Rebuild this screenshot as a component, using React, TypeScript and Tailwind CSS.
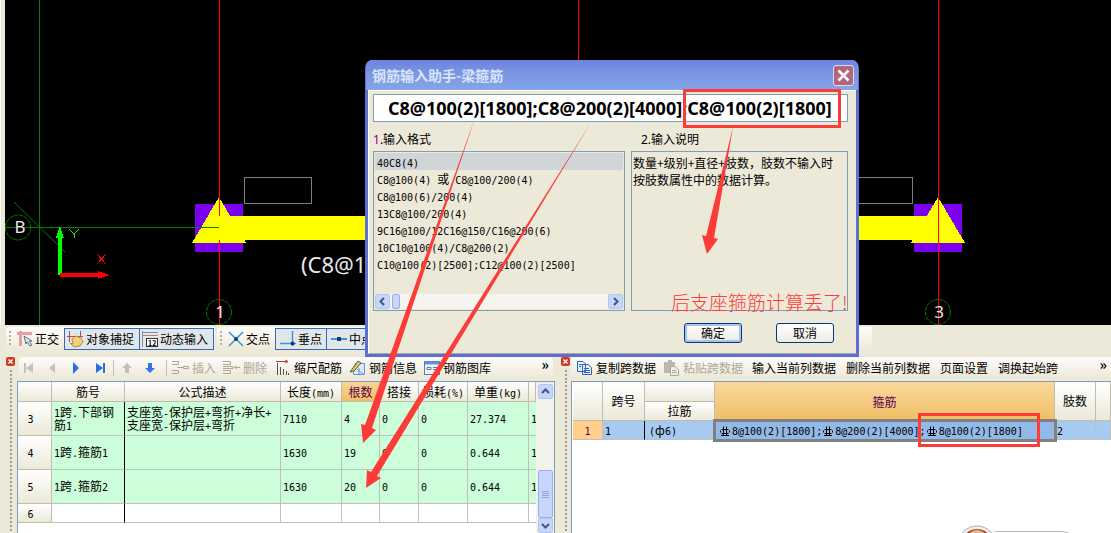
import { Fragment, type ReactNode } from "react";
import { clsx } from "clsx";

const formats = [
  "40C8(4)",
  "C8@100(4) 或 C8@100/200(4)",
  "C8@100(6)/200(4)",
  "13C8@100/200(4)",
  "9C16@100/12C16@150/C16@200(6)",
  "10C10@100(4)/C8@200(2)",
  "C10@100(2)[2500];C12@100(2)[2500]",
];

const barRows = [
  { no: "3", name: "1跨.下部钢筋1", desc: "支座宽-保护层+弯折+净长+\n支座宽-保护层+弯折", length: "7110", count: "4", lap: "0", loss: "0", weight: "27.374", total: "1" },
  { no: "4", name: "1跨.箍筋1", desc: "", length: "1630", count: "19", lap: "0", loss: "0", weight: "0.644", total: "1" },
  { no: "5", name: "1跨.箍筋2", desc: "", length: "1630", count: "20", lap: "0", loss: "0", weight: "0.644", total: "1" },
];

const headCell = "border-r border-b border-[#c0bcb0] bg-linear-to-b from-white to-[#ece9d8] font-normal p-0 text-center";
const bodyCell = "border-r border-b border-[#c0c0c0] pl-0.5 py-0";

// Half-width characters are set in a monospace face, six pixels each
function Mixed({ text }: { text: string }) {
  return (
    <>
      {text.split(/([\x20-\x7e]+)/).map((part, i) =>
        /^[\x20-\x7e]+$/.test(part) ? (
          <span key={i} className="font-['DejaVu_Sans_Mono',monospace] text-[10px] leading-none whitespace-pre">
            {part}
          </span>
        ) : (
          <Fragment key={i}>{part}</Fragment>
        )
      )}
    </>
  );
}

// Grade symbol of a ribbed bar
function BarSymbol() {
  return (
    <svg width="13" height="11" viewBox="0 0 13 11" className="inline-block align-[-2px]" fill="none" stroke="#000" aria-hidden="true">
      <path d="M4.5 0.5v9M7.5 0.5v9M2 9.5h8M2.5 3.5h7M1.5 4.5v2M10.5 4.5v2M2.5 7.5h7" />
    </svg>
  );
}

function Grip({ className }: { className?: string }) {
  return (
    <svg width="3" height="18" className={className} aria-hidden="true">
      {[1, 5, 9, 13].map((y) => (
        <rect key={y} y={y} width="2" height="2" fill="#b5b2a4" />
      ))}
    </svg>
  );
}

/* ── CAD VIEW ─────────────────────────────────────────────── */

function Support({ x }: { x: number }) {
  return (
    <>
      <rect x={x - 24} y="204" width="48" height="48" fill="#7b00ef" />
      <path d={`M${x} 197L${x + 27} 243H${x - 27}Z`} fill="#ff0" />
    </>
  );
}

function CadView() {
  return (
    <div className="h-[325px] bg-[#ece9d8] border-l border-white pl-1 shrink-0">
      <svg className="block w-full h-full bg-black" shapeRendering="crispEdges">
        <g transform="translate(-5 0)" fill="none">
          <path d="M244.500 177.500H311.500V203.500H244.500Z" stroke="#808080" />
          <path d="M840.500 177.500H912.500V203.500H840.500" stroke="#808080" />
          <Support x={219} />
          <Support x={938} />
          <rect x="219" y="216" width="720" height="24" fill="#ff0" />
          <path d="M39.500 0V325M5 227.500H219" stroke="#008000" />
          <path d="M219.500 0V216M219.500 240V325M938.500 0V325M578.500 0V60" stroke="#f00" />
          <g stroke="#008000" shapeRendering="auto">
            <path d="M14 202L65 252" />
            <circle cx="18" cy="227.500" r="12.500" strokeDasharray="4 1" />
            <circle cx="219" cy="312" r="12.500" strokeDasharray="4 1" />
            <circle cx="938" cy="312" r="12.500" strokeDasharray="4 1" />
          </g>
          <path d="M58 275V238H56L60 226L64 238H62V275Z" fill="#0f0" />
          <path d="M60 273V277H98V279L109 275L98 271V273Z" fill="#f00" />
          <path d="M69 229L74 234L79 229M74 234V238" stroke="#0f0" />
          <path d="M97 254L106 264M106 254L97 264" stroke="#f00" />
          <g className="font-['Noto_Sans',sans-serif]" fill="#e8e8e8" fontSize="17" textAnchor="middle">
            <text x="20" y="233">B</text>
            <text x="220" y="318">1</text>
            <text x="939" y="318">3</text>
          </g>
          <text x="301" y="273" fontSize="22" fill="#e8e8e8" className="font-['Noto_Sans',sans-serif]">
            (C8@1
          </text>
        </g>
      </svg>
    </div>
  );
}

/* ── SNAP TOOLBAR ─────────────────────────────────────────── */

function SnapButton({ active, className, icon, children }: { active?: boolean; className: string; icon: ReactNode; children: ReactNode }) {
  return (
    <button
      className={clsx(
        "flex items-center gap-0.5 h-[22px] border whitespace-nowrap shrink-0 overflow-hidden",
        active ? "border-[#316ac5] bg-[#e1e6e8]" : "border-transparent",
        className
      )}
    >
      {icon}
      {children}
    </button>
  );
}

function SnapToolbar() {
  return (
    <div className="flex h-8 pt-0.5 pl-1.5 bg-[#ece9d8] shrink-0">
      <div className="flex items-center h-6 w-[209px] rounded-l bg-linear-to-b from-[#fdfcfa] to-[#ece9d8]">
        <Grip className="ml-[3px]" />
        <SnapButton
          className="w-[49px] pl-1"
          icon={
            <svg width="16" height="16" className="shrink-0" aria-hidden="true">
              <path d="M0 2.500H15M3.500 0V15" stroke="#e7a0a0" strokeWidth="3" />
              <path d="M7 5l2 8 1-2 3 4 2-1-3-4h3z" fill="#dce8ee" stroke="#5d7385" />
            </svg>
          }
        >
          正交
        </SnapButton>
        <SnapButton
          active
          className="w-[76px] ml-[3px] pl-0.5"
          icon={
            <svg width="17" height="17" className="shrink-0" aria-hidden="true">
              <path d="M0 5.500H16M2.500 0V11M13.500 0V6" stroke="#a6534a" />
              <path d="M5 8l4-3 5 2 2 4-3 4-6 1-4-4 3 1z" fill="#efcf7f" stroke="#b58e3e" />
            </svg>
          }
        >
          对象捕捉
        </SnapButton>
        <SnapButton
          active
          className="w-[75px] -ml-px pl-0.5"
          icon={
            <svg width="16" height="16" className="shrink-0" aria-hidden="true">
              <path d="M0 1.500H16M0 4.500H16M.5 0V16" stroke="#a08888" />
              <rect x="4.500" y="7.500" width="11" height="8" fill="#fff" stroke="#333" />
              <text x="6" y="15" fontSize="7" fontWeight="bold">12</text>
            </svg>
          }
        >
          动态输入
        </SnapButton>
      </div>
      <div className="flex items-center h-6 w-[655px] ml-0.5 rounded-l bg-linear-to-b from-[#fdfcfa] to-[#ece9d8]">
        <Grip className="ml-[3px]" />
        <SnapButton
          className="w-[52px] pl-1"
          icon={
            <svg width="16" height="16" className="shrink-0" aria-hidden="true">
              <path d="M1 1L15 15M15 1L1 15" stroke="#3f94dc" strokeWidth="1.500" />
              <circle cx="8" cy="8" r="2" fill="#113c77" />
            </svg>
          }
        >
          交点
        </SnapButton>
        <SnapButton
          active
          className="w-[52px] pl-1"
          icon={
            <svg width="16" height="16" className="shrink-0" aria-hidden="true">
              <path d="M12.500 0V15M0 12.500H16" stroke="#3f94dc" strokeWidth="1.500" />
              <circle cx="12.500" cy="12.500" r="2" fill="#113c77" />
            </svg>
          }
        >
          垂点
        </SnapButton>
        <SnapButton
          active
          className="w-[52px] -ml-px pl-1"
          icon={
            <svg width="16" height="16" className="shrink-0" aria-hidden="true">
              <path d="M0 8H16" stroke="#3f94dc" strokeWidth="2" />
              <rect x="6" y="6" width="4" height="4" fill="#113c77" />
            </svg>
          }
        >
          中点
        </SnapButton>
      </div>
    </div>
  );
}

/* ── DOCKED PANELS ────────────────────────────────────────── */

function DockEdge() {
  return (
    <div className="flex flex-col items-center w-[11px] shrink-0">
      <button aria-label="关闭面板" className="size-[9px] rounded-xs bg-[#cf3c22] shrink-0">
        <svg viewBox="0 0 9 9" aria-hidden="true">
          <path d="M2.500 2.500l4 4M6.500 2.500l-4 4" stroke="#fff" strokeWidth="1.300" />
        </svg>
      </button>
      <div className="w-0.5 grow mt-1 bg-[repeating-linear-gradient(to_bottom,#a19f94_0_2px,transparent_2px_4px)]" />
    </div>
  );
}

function ToolButton({ label, disabled, icon, className }: { label: string; disabled?: boolean; icon?: ReactNode; className?: string }) {
  return (
    <button disabled={disabled} className={clsx("flex items-center gap-[3px] whitespace-nowrap shrink-0", disabled && "text-[#aca899]", className)}>
      {icon}
      {label}
    </button>
  );
}

function MoreButton() {
  return (
    <button aria-label="更多" className="self-start ml-auto mr-1 text-[14px] leading-[14px] font-bold">
      »
    </button>
  );
}

function NavButton({ label, d, color, className }: { label: string; d: string; color: string; className: string }) {
  return (
    <button aria-label={label} className={clsx("shrink-0", className)}>
      <svg width="12" height="12" className="block" aria-hidden="true">
        <path d={d} fill={color} />
      </svg>
    </button>
  );
}

function BarToolbar() {
  return (
    <div className="flex items-center h-[21px] mr-[5px] ml-[3px] rounded bg-linear-to-b from-[#fdfcfa] to-[#ece9d8]">
      <NavButton label="首条" color="#c3c2be" d="M0 1H2V11H0ZM9 1V11L2 6Z" className="ml-[5px]" />
      <NavButton label="上一条" color="#c3c2be" d="M8 1V11L2 6Z" className="ml-[11px]" />
      <NavButton label="下一条" color="#2a6fe0" d="M2 0V12L8 6Z" className="ml-3" />
      <NavButton label="末条" color="#2a6fe0" d="M8 1H10V11H8ZM1 1V11L8 6Z" className="ml-3" />
      <div className="w-px h-4 ml-1.5 bg-[#c5c2b2] shrink-0" />
      <NavButton label="上移" color="#c0bfbb" d="M6 1L11 6H8V11H4V6H1Z" className="ml-[7px]" />
      <NavButton label="下移" color="#3874df" d="M6 11L11 6H8V1H4V6H1Z" className="ml-[11px]" />
      <div className="w-px h-4 ml-2.5 bg-[#c5c2b2] shrink-0" />
      <ToolButton
        label="插入"
        disabled
        className="ml-[5px]"
        icon={
          <svg width="17" height="16" fill="none" stroke="#aca899" aria-hidden="true">
            <path d="M0 1.500H6.500V4.500H0M0 10.500H6.500V13.500H0M5 7.500H11M11.500 6.500H16.500V8.500H11.500Z" />
          </svg>
        }
      />
      <ToolButton
        label="删除"
        disabled
        className="ml-[7px]"
        icon={
          <svg width="17" height="16" fill="none" stroke="#aca899" aria-hidden="true">
            <path d="M0 1.500H7.500V4.500H0M0 10.500H7.500V13.500H0M0 6.500H10V8.500H0M11 7.500H17M13 5.500V9.500" />
          </svg>
        }
      />
      <ToolButton
        label="缩尺配筋"
        className="ml-[9px]"
        icon={
          <svg width="15" height="16" fill="none" aria-hidden="true">
            <path d="M1.500 3V15M4.500 7V15M7.500 9V15M10.500 11V15M12.500 13V15" stroke="#555" />
            <path d="M0 1.500H12M9 0L12 1.500L9 3" stroke="#c04030" />
          </svg>
        }
      />
      <ToolButton
        label="钢筋信息"
        className="ml-[7px]"
        icon={
          <svg width="17" height="16" aria-hidden="true">
            <path d="M6.500 3.500H15.500V14.500H4.500V8Z" fill="#dbe9fb" stroke="#6593cf" />
            <path d="M1 12L9 1L12 3L5 11Z" fill="#edc45b" stroke="#555" />
            <path d="M8 9L14 14M10 8V14" stroke="#6593cf" />
          </svg>
        }
      />
      <ToolButton
        label="钢筋图库"
        className="ml-[7px]"
        icon={
          <svg width="16" height="16" aria-hidden="true">
            <rect x=".5" y="1.500" width="15" height="13" fill="#eef5fd" stroke="#4d7fc4" />
            <path d="M1 3H15" stroke="#5f94dc" strokeWidth="3" />
            <path d="M3 7.500H7V9.500H3ZM9 7.500H14M9 9.500H14" stroke="#777" fill="none" />
          </svg>
        }
      />
      <MoreButton />
    </div>
  );
}

function ScrollArrow({ d, label }: { d: string; label: string }) {
  return (
    <button aria-label={label} className="flex items-center justify-center w-[15px] h-[15px] rounded-xs border border-[#b4c6ee] bg-[#c6d5fc] shrink-0">
      <svg width="9" height="9" aria-hidden="true">
        <path d={d} fill="none" stroke="#3f5787" strokeWidth="2" />
      </svg>
    </button>
  );
}

function BarPanel() {
  return (
    <section className="flex w-[553px] shrink-0">
      <div className="flex flex-col w-full">
        <div className="flex h-6">
          <DockEdge />
          <div className="grow">
            <BarToolbar />
          </div>
        </div>
        <div className="flex grow min-h-0">
          <div className="w-[7px] shrink-0 ml-[5px] bg-[repeating-linear-gradient(to_bottom,#a19f94_0_2px,transparent_2px_4px)] bg-size-[2px_100%] bg-no-repeat" />
          <div className="flex grow mr-[3px] border border-b-0 border-[#7f9db9] bg-white overflow-hidden">
            <div className="w-[518px] overflow-hidden shrink-0">
              <table className="w-full table-fixed border-separate border-spacing-0">
                <colgroup>
                  <col className="w-[34px]" />
                  <col className="w-[73px]" />
                  <col className="w-[156px]" />
                  <col className="w-[61px]" />
                  <col className="w-[38px]" />
                  <col className="w-[39px]" />
                  <col className="w-[49px]" />
                  <col className="w-[61px]" />
                  <col />
                </colgroup>
                <thead>
                  <tr className="h-5 leading-[19px]">
                    <th className={headCell} />
                    <th className={headCell}>筋号</th>
                    <th className={headCell}>公式描述</th>
                    <th className={headCell}><Mixed text="长度(mm)" /></th>
                    <th className="border-r border-b border-[#c0bcb0] bg-linear-to-b from-[#f9d596] to-[#f0bf62] font-normal text-[#5a0050] p-0">根数</th>
                    <th className={headCell}>搭接</th>
                    <th className={clsx(headCell, "whitespace-nowrap")}><Mixed text="损耗(%)" /></th>
                    <th className={headCell}><Mixed text="单重(kg)" /></th>
                    <th className={clsx(headCell, "overflow-hidden")} />
                  </tr>
                </thead>
                <tbody className="leading-3">
                  {barRows.map((row) => (
                    <tr key={row.no} className="h-[34px] bg-[#ccffd9]">
                      <th className={clsx(headCell, "pr-2")}><Mixed text={row.no} /></th>
                      <td className={clsx(bodyCell, "border-r-black")}><Mixed text={row.name} /></td>
                      <td className={clsx(bodyCell, "whitespace-pre-line")}><Mixed text={row.desc} /></td>
                      <td className={bodyCell}><Mixed text={row.length} /></td>
                      <td className={bodyCell}><Mixed text={row.count} /></td>
                      <td className={bodyCell}><Mixed text={row.lap} /></td>
                      <td className={bodyCell}><Mixed text={row.loss} /></td>
                      <td className={bodyCell}><Mixed text={row.weight} /></td>
                      <td className={clsx(bodyCell, "border-r-0")}><Mixed text={row.total} /></td>
                    </tr>
                  ))}
                  <tr className="h-[19px]">
                    <th className={clsx(headCell, "pr-2")}><Mixed text="6" /></th>
                    <td className={clsx(bodyCell, "border-r-black")} />
                    <td className={bodyCell} />
                    <td className={bodyCell} />
                    <td className={bodyCell} />
                    <td className={bodyCell} />
                    <td className={bodyCell} />
                    <td className={bodyCell} />
                    <td className={clsx(bodyCell, "border-r-0")} />
                  </tr>
                </tbody>
              </table>
            </div>
            <div className="flex flex-col items-center grow pt-0.5 bg-[#f3f1ec]">
              <ScrollArrow label="向上滚动" d="M1 6L4.500 2.500L8 6" />
              <div className="flex flex-col items-center justify-center gap-px w-[15px] h-12 mt-auto rounded-xs border border-[#98b0e8] bg-[#c6d5fc]">
                <div className="w-[7px] h-px bg-[#8ca7e0]" />
                <div className="w-[7px] h-px bg-[#8ca7e0]" />
                <div className="w-[7px] h-px bg-[#8ca7e0]" />
                <div className="w-[7px] h-px bg-[#8ca7e0]" />
              </div>
              <ScrollArrow label="向下滚动" d="M1 3L4.500 6.500L8 3" />
            </div>
          </div>
        </div>
      </div>
    </section>
  );
}

function SpanToolbar() {
  return (
    <div className="flex items-center h-[21px] grow pl-[5px] rounded-l bg-linear-to-b from-[#fdfcfa] to-[#ece9d8]">
      <ToolButton
        label="复制跨数据"
        icon={
          <svg width="17" height="16" fill="#e3effd" stroke="#2f66b3" aria-hidden="true">
            <path d="M1.500 1.500H7L9.500 4V11.500H1.500ZM6.500 4.500H12L15.500 7.500V14.500H6.500Z" />
            <path d="M8 8.500H13M8 10.500H14M8 12.500H14M3 4.500H6M3 6.500H5" />
          </svg>
        }
      />
      <ToolButton
        label="粘贴跨数据"
        disabled
        className="ml-[7px]"
        icon={
          <svg width="17" height="16" aria-hidden="true">
            <path d="M1 2H5V0H9V2H12V13H1Z" fill="#bbb9ae" />
            <path d="M7.500 6.500H12L15.500 9.500V15.500H7.500Z" fill="#eee" stroke="#aca899" />
            <path d="M9 10.500H13M9 12.500H14" stroke="#aca899" />
          </svg>
        }
      />
      <ToolButton label="输入当前列数据" className="ml-[9px]" />
      <ToolButton label="删除当前列数据" className="ml-2.5" />
      <ToolButton label="页面设置" className="ml-2.5" />
      <ToolButton label="调换起始跨" className="ml-2.5" />
      <MoreButton />
    </div>
  );
}

function SpanPanel() {
  const activeHead = "border-r border-[#c0bcb0] bg-linear-to-b from-[#f9d79d] to-[#f0bf62] font-normal text-[#5a0050]";
  return (
    <section className="flex flex-col grow min-w-0 ml-0.5">
      <div className="flex h-6">
        <DockEdge />
        <SpanToolbar />
      </div>
      <div className="flex grow min-h-0">
        <div className="w-1.5 shrink-0 ml-[5px] bg-[repeating-linear-gradient(to_bottom,#a19f94_0_2px,transparent_2px_4px)] bg-size-[2px_100%] bg-no-repeat" />
        <div className="grow border-l border-t border-[#7f9db9] bg-white overflow-hidden pl-px">
          <table className="w-full table-fixed border-separate border-spacing-0">
            <colgroup>
              <col className="w-[30px]" />
              <col className="w-[42px]" />
              <col className="w-[70px]" />
              <col />
              <col className="w-[41px]" />
              <col className="w-[15px]" />
            </colgroup>
            <thead className="leading-[18px]">
              <tr className="h-5">
                <th rowSpan={2} className={headCell} />
                <th rowSpan={2} className={headCell}>跨号</th>
                <th className={headCell} />
                <th rowSpan={2} className={activeHead}>箍筋</th>
                <th rowSpan={2} className={headCell}>肢数</th>
                <th rowSpan={2} className={headCell} />
              </tr>
              <tr className="h-[19px]">
                <th className={headCell}>拉筋</th>
              </tr>
            </thead>
            <tbody>
              <tr className="h-[19px] leading-3 bg-[#a6caf0]">
                <th className="border-r border-b border-[#c0c0c0] bg-[#ffcf8b] font-normal text-[#5a0050] p-0"><Mixed text="1" /></th>
                <td className={clsx(bodyCell, "border-r-black")}><Mixed text="1" /></td>
                <td className={clsx(bodyCell, "pl-1")}><Mixed text="(" />ф<Mixed text="6)" /></td>
                <td className="p-0 pl-1 bg-[#93b9e8] outline-3 -outline-offset-1 outline-[#808080] whitespace-nowrap">
                  <BarSymbol />
                  <Mixed text="8@100(2)[1800];" />
                  <BarSymbol />
                  <Mixed text="8@200(2)[4000];" />
                  <BarSymbol />
                  <Mixed text="8@100(2)[1800]" />
                </td>
                <td className={bodyCell}><Mixed text="2" /></td>
                <td className={bodyCell} />
              </tr>
            </tbody>
          </table>
        </div>
      </div>
    </section>
  );
}

/* ── INPUT HELPER DIALOG ──────────────────────────────────── */

function InputDialog() {
  const button = "h-5 rounded-[3px] border border-[#003c74] bg-linear-to-b from-white to-[#ecebe5] leading-[18px]";
  return (
    <div role="dialog" aria-labelledby="dialog-title" className="absolute left-[365px] top-[60px] w-[494px] rounded-t-lg border-x-3 border-b-3 border-[#5e6fd4] bg-[#ece9d8]">
      <div className="flex items-center h-[30px] pl-1.5 pr-0.5 -mx-0.5 rounded-t-md bg-linear-to-b from-[#6c84df] via-[#7c98e2] to-[#84a6ea]">
        <h1 id="dialog-title" className="text-[14px] font-bold text-[#d8e4fa]">钢筋输入助手-梁箍筋</h1>
        <button aria-label="关闭" className="flex items-center justify-center ml-auto mr-0.5 size-[21px] rounded-[3px] border border-[#d6dcf2] bg-[#b5667c]">
          <svg width="13" height="13" aria-hidden="true">
            <path d="M1.500 1.500l10 10M11.500 1.500l-10 10" stroke="#fff" strokeWidth="2.500" />
          </svg>
        </button>
      </div>
      <div className="border-t border-l border-white border-b-[#aca899] border-b pt-[3px] pl-1 pr-2 pb-2.5">
        <input
          aria-label="箍筋"
          defaultValue="C8@100(2)[1800];C8@200(2)[4000];C8@100(2)[1800]"
          className="block w-full h-7 pl-3.5 border border-[#7f9db9] bg-white font-['Noto_Sans',sans-serif] text-[18px] font-bold text-black outline-none"
        />
        <div className="flex gap-1.5 mt-[9px]">
          <div className="w-[252px] shrink-0">
            <h2 className="h-5 leading-[18px] font-['Noto_Sans','Noto_Sans_CJK_SC',sans-serif]"><span className="text-[#800080]">1</span>.输入格式</h2>
            <div className="flex flex-col h-40 border border-[#7f9db9] p-px">
              <ul className="leading-[17px]">
                {formats.map((format, i) => (
                  <li key={format} className={clsx("h-[17px] pl-0.5 whitespace-nowrap", i === 0 && "bg-[#d0d6d7]")}>
                    <Mixed text={format} />
                  </li>
                ))}
              </ul>
              <div className="flex mt-auto h-[15px] bg-[#f6f4ef]">
                <ScrollArrow label="向左滚动" d="M6 1L2.500 4.500L6 8" />
                <div className="w-2 ml-0.5 rounded-xs border border-[#98b0e8] bg-[#c6d5fc]" />
                <div className="grow" />
                <ScrollArrow label="向右滚动" d="M3 1L6.500 4.500L3 8" />
              </div>
            </div>
          </div>
          <div className="grow">
            <h2 className="h-5 pl-2.5 leading-[18px] font-['Noto_Sans','Noto_Sans_CJK_SC',sans-serif]">2.输入说明</h2>
            <p className="h-40 border border-[#7f9db9] pl-px pt-0.5 leading-[17px]">
              数量+级别+直径+肢数，肢数不输入时
              <br />
              按肢数属性中的数据计算。
            </p>
          </div>
        </div>
        <div className="flex justify-end gap-[34px] mt-3 mr-3.5">
          <button className={clsx(button, "w-[58px] shadow-[inset_0_0_0_2px_#a9c2f0]")}>确定</button>
          <button className={clsx(button, "w-[58px]")}>取消</button>
        </div>
      </div>
    </div>
  );
}

/* ── MARKUP OVER THE WINDOW ───────────────────────────────── */

function Markup() {
  return (
    <div className="absolute inset-0 pointer-events-none">
      <svg className="absolute inset-0 w-full h-full" aria-hidden="true">
        <g fill="#fd3c39">
          <path d="M475 118L365 425L361 424L363 443L376 430L372 428Z" />
          <path d="M592 121L371 472L367 470L366 488L381 478L377 476Z" />
          <path d="M733 127L706 236L702 235L707 254L718 239L714 238Z" />
        </g>
        <g fill="none" stroke="#fd3c39" strokeWidth="3">
          <rect x="684.500" y="90.500" width="155" height="36" />
          <rect x="919.500" y="414.500" width="119" height="31" />
        </g>
        <circle cx="977" cy="545" r="19" fill="#f4f2f0" stroke="#aaa" />
        <circle cx="977" cy="545" r="16" fill="#b4481f" />
        <ellipse cx="977" cy="536" rx="8" ry="6" fill="#e8b496" />
        <path d="M995 531.500H1063L1072 534" fill="none" stroke="#b5b5b5" />
      </svg>
      <p className="absolute left-[671px] top-[290px] text-[19px] leading-6 font-light text-[#fd3c39] whitespace-nowrap">后支座箍筋计算丢了!</p>
    </div>
  );
}

export default function App() {
  return (
    <main className="relative flex flex-col min-h-screen overflow-hidden bg-[#ece9d8] font-['Noto_Sans_CJK_SC',sans-serif] text-[12px] text-black">
      <CadView />
      <SnapToolbar />
      <div className="flex grow pl-[5px]">
        <BarPanel />
        <SpanPanel />
      </div>
      <InputDialog />
      <Markup />
    </main>
  );
}
